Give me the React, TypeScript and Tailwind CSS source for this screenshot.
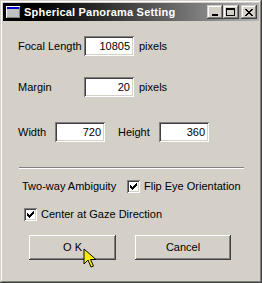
import React from "react";

const raised =
  "shadow-[inset_-1px_-1px_#404040,inset_1px_1px_#ffffff,inset_-2px_-2px_#808080,inset_2px_2px_#d4d0c8]";
const sunken =
  "shadow-[inset_1px_1px_#808080,inset_-1px_-1px_#ffffff,inset_2px_2px_#404040,inset_-2px_-2px_#d4d0c8]";

function Field({ value }: { value: string }) {
  return (
    <div className={`w-[50px] h-[20px] bg-white ${sunken} flex items-center justify-end pr-[4px]`}>
      {value}
    </div>
  );
}

function Check({ label }: { label: string }) {
  return (
    <div className="flex items-center h-[13px]">
      <div className={`w-[13px] h-[13px] bg-white ${sunken} flex items-center justify-center`}>
        <svg width="7" height="7" viewBox="0 0 7 7">
          <path d="M0 2h1v1h1v1h1v-1h1v-1h1v-1h1v-1h1v3h-1v1h-1v1h-1v1h-1v1h-1v-1h-1v-1h-1z" fill="#000" />
        </svg>
      </div>
      <span className="ml-[4px]">{label}</span>
    </div>
  );
}

function TitleButton({ children, className = "" }: { children: React.ReactNode; className?: string }) {
  return (
    <div
      className={`w-[16px] h-[14px] bg-[#d4d0c8] shadow-[inset_-1px_-1px_#404040,inset_1px_1px_#d4d0c8,inset_-2px_-2px_#808080,inset_2px_2px_#ffffff] flex items-center justify-center ${className}`}
    >
      {children}
    </div>
  );
}

export default function App() {
  return (
    <div
      className="relative w-[262px] h-[283px] bg-[#d4d0c8] p-[3px] text-[11px] text-black leading-none shadow-[inset_-1px_-1px_#404040,inset_1px_1px_#d4d0c8,inset_-2px_-2px_#808080,inset_2px_2px_#ffffff]"
      style={{ fontFamily: '"Liberation Sans", Arial, sans-serif' }}
    >
      {/* title bar */}
      <div className="h-[18px] flex items-center bg-linear-to-r from-black to-[#b4b4b4] pr-[2px]">
        <svg width="14" height="12" viewBox="0 0 14 12" className="ml-[3px]">
          <rect x="0" y="0" width="14" height="12" fill="#ffffff" />
          <rect x="1" y="1" width="13" height="11" fill="#808080" />
          <rect x="1" y="1" width="12" height="10" fill="#c0c0c0" />
          <rect x="1" y="1" width="12" height="2" fill="#0000c0" />
        </svg>
        <span className="ml-[4px] font-bold text-white text-[11px] tracking-[0.2px]">Spherical Panorama Setting</span>
        <div className="ml-auto flex items-center">
          <TitleButton>
            <div className="w-[6px] h-[2px] bg-black mt-[6px] -ml-[1px]" />
          </TitleButton>
          <TitleButton>
            <div className="w-[9px] h-[8px] border border-black border-t-2 -ml-[1px]" />
          </TitleButton>
          <TitleButton className="ml-[2px]">
            <svg width="8" height="7" viewBox="0 0 8 7" className="-ml-[1px]">
              <path d="M0 0h2v1h1v1h2v-1h1v-1h2v1h-1v1h-1v1h-1v1h1v1h1v1h1v1h-2v-1h-1v-1h-2v1h-1v1h-2v-1h1v-1h1v-1h1v-1h-1v-1h-1v-1h-1z" fill="#000" />
            </svg>
          </TitleButton>
        </div>
      </div>

      {/* body */}
      <div className="flex flex-col">
        <div className="mt-[15px] flex items-center pl-[15px]">
          <span className="w-[66px]">Focal Length</span>
          <Field value="10805" />
          <span className="ml-[5px]">pixels</span>
        </div>
        <div className="mt-[21px] flex items-center pl-[15px]">
          <span className="w-[66px]">Margin</span>
          <Field value="20" />
          <span className="ml-[5px]">pixels</span>
        </div>
        <div className="mt-[25px] flex items-center pl-[15px]">
          <span className="w-[37px]">Width</span>
          <Field value="720" />
          <span className="ml-[13px] w-[41px]">Height</span>
          <Field value="360" />
        </div>

        <div className="mt-[25px] ml-[16px] w-[225px] h-[2px] border-t border-t-[#808080] border-b border-b-white" />

        <div className="mt-[11px] flex items-center pl-[19px]">
          <span className="w-[105px]">Two-way Ambiguity</span>
          <Check label="Flip Eye Orientation" />
        </div>
        <div className="mt-[15px] pl-[21px]">
          <Check label="Center at Gaze Direction" />
        </div>

        <div className="mt-[14px] flex pl-[26px]">
          <div className={`w-[87px] h-[25px] bg-[#d4d0c8] ${raised} flex items-center justify-center`}>O K</div>
          <div className={`ml-[19px] w-[96px] h-[25px] bg-[#d4d0c8] ${raised} flex items-center justify-center`}>
            Cancel
          </div>
        </div>
      </div>

      {/* mouse pointer */}
      <svg width="14" height="20" viewBox="0 0 14 20" className="absolute left-[83px] top-[248px]">
        <path d="M1 1v15l4-4 3 7 2.5-1-3-6.5h5.5z" fill="#ffff00" stroke="#000" strokeWidth="1" />
        <path d="M2 3v10l3-3 3 7 1-.4-3-6.6h4z" fill="#e0c000" opacity="0.35" />
      </svg>
    </div>
  );
}
